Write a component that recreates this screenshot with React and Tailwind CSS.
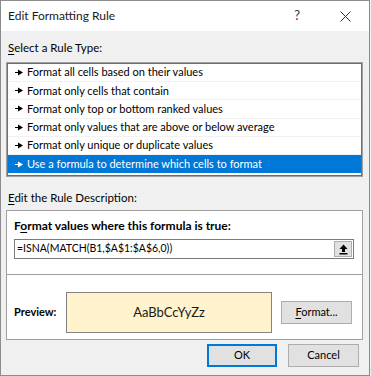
const rules = [
  "Format all cells based on their values",
  "Format only cells that contain",
  "Format only top or bottom ranked values",
  "Format only values that are above or below average",
  "Format only unique or duplicate values",
  "Use a formula to determine which cells to format",
];

const Bullet = ({ color }) => (
  <svg width="8" height="7" viewBox="0 0 8 7" className="shrink-0">
    <rect x="0" y="3" width="4" height="1" fill={color} />
    <polygon points="3,0.5 8,3.5 3,6.5" fill={color} />
  </svg>
);

const App = () => {
  return (
    <div
      className="w-[371px] h-[376px] bg-[#f0f0f0] text-[#000] text-[11px]"
      style={{ fontFamily: 'Lato, "Noto Sans", sans-serif' }}
    >
      <div className="w-[370px] h-[376px] flex flex-col border border-[#8c8c8c] bg-[#f0f0f0]">
        {/* title bar */}
        <div className="h-[30px] bg-white flex items-center shrink-0">
          <span className="ml-[7px] text-[12px] text-[#1a1a1a]">Edit Formatting Rule</span>
          <span className="ml-auto mr-[40px] text-[13px] text-[#333]">?</span>
          <svg width="11" height="11" viewBox="0 0 11 11" className="mr-[18px]">
            <path d="M0.5 0.5 L10.5 10.5 M10.5 0.5 L0.5 10.5" stroke="#333" strokeWidth="1" />
          </svg>
        </div>

        {/* body */}
        <div className="flex flex-col px-[5px]">
          <div className="mt-[9px] ml-[2px] h-[16px] leading-[16px] text-[11.5px]">
            <span className="underline underline-offset-2">S</span>elect a Rule Type:
          </div>

          <div className="mt-[6px] w-[357px] h-[115px] border border-[#a0a0a0] bg-white overflow-hidden">
            <div className="h-full border border-[#6e6e6e] flex flex-col">
              {rules.map((r, i) => {
                const sel = i === rules.length - 1;
                return (
                  <div
                    key={r}
                    className={
                      sel
                        ? "h-[18.2px] shrink-0 flex items-center gap-[4px] pl-[7px] bg-[#0078d7] text-white"
                        : "h-[18.2px] shrink-0 flex items-center gap-[4px] pl-[7px] border-b border-[#f2f2f2]"
                    }
                  >
                    <Bullet color={sel ? "#ffffff" : "#000000"} />
                    <span>{r}</span>
                  </div>
                );
              })}
            </div>
          </div>

          <div className="mt-[13px] ml-[2px] h-[16px] leading-[16px] text-[11.5px]">
            <span className="underline underline-offset-2">E</span>dit the Rule Description:
          </div>

          <div className="mt-[4px] w-[357px] h-[130px] border border-[#a0a0a0] bg-white flex flex-col">
            <div className="h-[64px] shrink-0 border-b border-[#a0a0a0] flex flex-col px-[7px]">
              <div className="mt-[7px] h-[16px] font-bold leading-[16px] text-[12px]">
                F<span className="underline underline-offset-2">o</span>rmat values where this formula is true:
              </div>
              <div className="mt-[5px] w-[340px] h-[20px] border border-[#7a7a7a] flex items-center">
                <span className="pl-[2px] text-[10.5px]">=ISNA(MATCH(B1,$A$1:$A$6,0))</span>
                <div className="ml-auto mr-[1px] w-[18px] h-[16px] bg-[#e1e1e1] border border-[#adadad] flex items-center justify-center">
                  <svg width="9" height="11" viewBox="0 0 9 11">
                    <polygon points="4.5,0.5 8.5,5 6,5 6,8 3,8 3,5 0.5,5" fill="#000" />
                    <rect x="0.5" y="9" width="8" height="1.5" fill="#000" />
                  </svg>
                </div>
              </div>
            </div>

            <div className="flex items-center mt-[17px] px-[7px]">
              <span className="font-bold w-[52px]">Preview:</span>
              <div className="w-[206px] h-[41px] border border-[#838383] bg-[#fff2cc] flex items-center justify-center text-[13px] text-[#1a1a1a]">
                AaBbCcYyZz
              </div>
              <div className="ml-[9px] w-[71px] h-[23px] bg-[#e1e1e1] border border-[#adadad] flex items-center justify-center">
                <span>
                  <span className="underline underline-offset-2">F</span>ormat...
                </span>
              </div>
            </div>
          </div>

          <div className="mt-[4px] flex justify-end gap-[11px] pr-[5px]">
            <div className="w-[70px] h-[23px] bg-[#e1e1e1] border-2 border-[#0078d7] flex items-center justify-center">
              OK
            </div>
            <div className="w-[71px] h-[23px] bg-[#e1e1e1] border border-[#adadad] flex items-center justify-center">
              Cancel
            </div>
          </div>
        </div>
      </div>
    </div>
  );
};

export default App;
